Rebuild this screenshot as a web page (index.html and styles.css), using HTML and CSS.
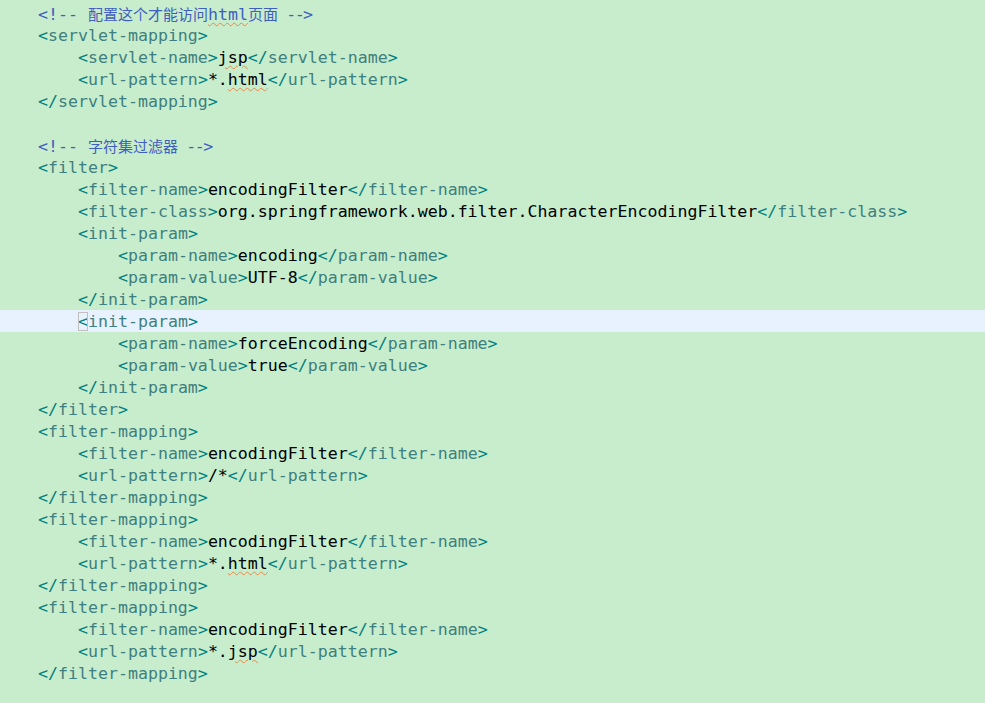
FILE: index.html
```html
<!DOCTYPE html>
<html lang="zh">
<head>
<meta charset="utf-8">
<title>web.xml</title>
<link rel="stylesheet" href="styles.css">
</head>
<body>
<div class="editor">
<div class="line"><span class="c">&lt;!-- <span class="cjk">配置这个才能访问</span><span class="sq">html</span><span class="cjk">页面</span><span class="tail"> --&gt;</span></span></div>
<div class="line"><span class="b">&lt;</span><span class="t">servlet-mapping</span><span class="b">&gt;</span></div>
<div class="line">    <span class="b">&lt;</span><span class="t">servlet-name</span><span class="b">&gt;</span><span class="sq">jsp</span><span class="b">&lt;/</span><span class="t">servlet-name</span><span class="b">&gt;</span></div>
<div class="line">    <span class="b">&lt;</span><span class="t">url-pattern</span><span class="b">&gt;</span>*.<span class="sq">html</span><span class="b">&lt;/</span><span class="t">url-pattern</span><span class="b">&gt;</span></div>
<div class="line"><span class="b">&lt;/</span><span class="t">servlet-mapping</span><span class="b">&gt;</span></div>
<div class="line"></div>
<div class="line"><span class="c">&lt;!-- <span class="cjk">字符集过滤器</span><span class="tail"> --&gt;</span></span></div>
<div class="line"><span class="b">&lt;</span><span class="t">filter</span><span class="b">&gt;</span></div>
<div class="line">    <span class="b">&lt;</span><span class="t">filter-name</span><span class="b">&gt;</span>encodingFilter<span class="b">&lt;/</span><span class="t">filter-name</span><span class="b">&gt;</span></div>
<div class="line">    <span class="b">&lt;</span><span class="t">filter-class</span><span class="b">&gt;</span>org.springframework.web.filter.CharacterEncodingFilter<span class="b">&lt;/</span><span class="t">filter-class</span><span class="b">&gt;</span></div>
<div class="line">    <span class="b">&lt;</span><span class="t">init-param</span><span class="b">&gt;</span></div>
<div class="line">        <span class="b">&lt;</span><span class="t">param-name</span><span class="b">&gt;</span>encoding<span class="b">&lt;/</span><span class="t">param-name</span><span class="b">&gt;</span></div>
<div class="line">        <span class="b">&lt;</span><span class="t">param-value</span><span class="b">&gt;</span>UTF-8<span class="b">&lt;/</span><span class="t">param-value</span><span class="b">&gt;</span></div>
<div class="line">    <span class="b">&lt;/</span><span class="t">init-param</span><span class="b">&gt;</span></div>
<div class="line current">    <span class="b match">&lt;</span><span class="t">init-param</span><span class="b">&gt;</span></div>
<div class="line">        <span class="b">&lt;</span><span class="t">param-name</span><span class="b">&gt;</span>forceEncoding<span class="b">&lt;/</span><span class="t">param-name</span><span class="b">&gt;</span></div>
<div class="line">        <span class="b">&lt;</span><span class="t">param-value</span><span class="b">&gt;</span>true<span class="b">&lt;/</span><span class="t">param-value</span><span class="b">&gt;</span></div>
<div class="line">    <span class="b">&lt;/</span><span class="t">init-param</span><span class="b">&gt;</span></div>
<div class="line"><span class="b">&lt;/</span><span class="t">filter</span><span class="b">&gt;</span></div>
<div class="line"><span class="b">&lt;</span><span class="t">filter-mapping</span><span class="b">&gt;</span></div>
<div class="line">    <span class="b">&lt;</span><span class="t">filter-name</span><span class="b">&gt;</span>encodingFilter<span class="b">&lt;/</span><span class="t">filter-name</span><span class="b">&gt;</span></div>
<div class="line">    <span class="b">&lt;</span><span class="t">url-pattern</span><span class="b">&gt;</span>/*<span class="b">&lt;/</span><span class="t">url-pattern</span><span class="b">&gt;</span></div>
<div class="line"><span class="b">&lt;/</span><span class="t">filter-mapping</span><span class="b">&gt;</span></div>
<div class="line"><span class="b">&lt;</span><span class="t">filter-mapping</span><span class="b">&gt;</span></div>
<div class="line">    <span class="b">&lt;</span><span class="t">filter-name</span><span class="b">&gt;</span>encodingFilter<span class="b">&lt;/</span><span class="t">filter-name</span><span class="b">&gt;</span></div>
<div class="line">    <span class="b">&lt;</span><span class="t">url-pattern</span><span class="b">&gt;</span>*.<span class="sq">html</span><span class="b">&lt;/</span><span class="t">url-pattern</span><span class="b">&gt;</span></div>
<div class="line"><span class="b">&lt;/</span><span class="t">filter-mapping</span><span class="b">&gt;</span></div>
<div class="line"><span class="b">&lt;</span><span class="t">filter-mapping</span><span class="b">&gt;</span></div>
<div class="line">    <span class="b">&lt;</span><span class="t">filter-name</span><span class="b">&gt;</span>encodingFilter<span class="b">&lt;/</span><span class="t">filter-name</span><span class="b">&gt;</span></div>
<div class="line">    <span class="b">&lt;</span><span class="t">url-pattern</span><span class="b">&gt;</span>*.<span class="sq">jsp</span><span class="b">&lt;/</span><span class="t">url-pattern</span><span class="b">&gt;</span></div>
<div class="line"><span class="b">&lt;/</span><span class="t">filter-mapping</span><span class="b">&gt;</span></div>
</div>
</body>
</html>
```
FILE: styles.css
```css
html, body {
  margin: 0;
  padding: 0;
  background: #c7edcc;
  height: 100%;
  overflow: hidden;
}
.editor {
  padding-top: 2px;
  font-family: "DejaVu Sans Mono", "Liberation Mono", monospace;
  font-size: 16.6px;
  color: #000000;
}
.line {
  height: 22px;
  line-height: 24px;
  white-space: pre;
  padding-left: 38px;
}
.line.current {
  background: #e8f2fe;
}
.b { color: #008080; }
.t { color: #3f7f7f; }
.c { color: #3f5fbf; }
.cjk {
  font-family: "Noto Sans CJK SC", sans-serif;
  font-size: 15px;
}
.tail {
  letter-spacing: -1.6px;
}
.sq {
  text-decoration: underline wavy #e8894a;
  text-decoration-thickness: 1px;
  text-underline-offset: 2px;
}
.match {
  outline: 1px solid #c0c0c0;
  outline-offset: -1px;
}
```
